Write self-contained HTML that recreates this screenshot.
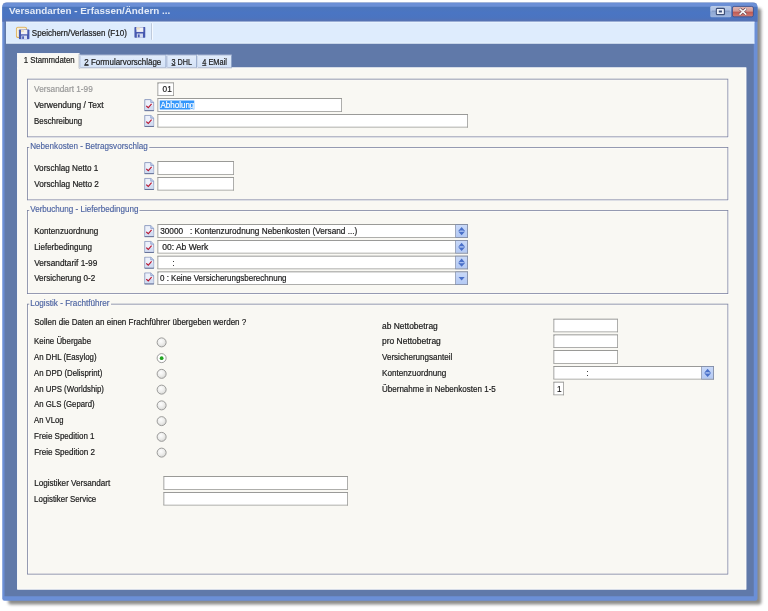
<!DOCTYPE html>
<html lang="de"><head><meta charset="utf-8"><title>Versandarten - Erfassen/Ändern ...</title>
<style>
*{box-sizing:border-box;margin:0;padding:0}
html,body{width:768px;height:611px;overflow:hidden;background:#fff}
body{position:relative;font-family:"Liberation Sans",sans-serif;font-size:11px;color:#1a1a1a;line-height:14px}
#s{position:absolute;left:0;top:0;width:1024px;height:814px;transform:scale(.75);transform-origin:0 0}
#s *{position:absolute}
.shadow{left:11px;top:11px;width:1004px;height:795px;background:#8b8b89;border-radius:3px;filter:blur(2.2px)}
.win{left:3px;top:3px;width:1007px;height:798px;background:#6b8fd6;border-radius:6px 6px 3px 3px;border-top:1px solid #5a78b6}
.title{left:3px;top:9px;width:1007px;height:20px;background:linear-gradient(#4d76bb,#4a75c3 40%,#4b74c0 75%,#5a71af)}
.tt{font-weight:bold;font-size:13.3px;line-height:16px;left:0;top:0;padding:4px;color:#e4ebf7;white-space:pre;transform-origin:0 0}
.inner{left:6px;top:29px;width:999px;height:766px;background:#6079a9}
.toolbar{left:8px;top:29px;width:998px;height:29px;background:#deecfd;border-top:1px solid #eef6ff;border-bottom:1px solid #f0f7ff}
.panel{left:23px;top:90px;width:972px;height:696px;background:#f9f8f3;border:1px solid #fff}
.t{white-space:pre;line-height:14px;left:0;top:0;padding:4px;transform-origin:0 0;-webkit-text-stroke:.25px}
.gb{border:1px solid #747b9c;box-shadow:1px 1px 0 rgba(255,255,255,.9),inset 1px 1px 0 rgba(255,255,255,.9)}
.gt{color:#4d64a2;white-space:pre;line-height:14px;left:0;top:0;padding:4px;transform-origin:0 0;-webkit-text-stroke:.2px}
.gtb{background:#f9f8f3;height:3px}
.fld{background:#fff;border:1px solid #939390;border-top-color:#787876;border-left-color:#858583}
.tab{top:73px;height:18px;background:linear-gradient(#e2ecfb,#d3e2f7);border:1px solid #eef4fd;border-bottom-color:#9faac2;border-right-color:#9db0d0}
.tab.act{top:71px;height:21px;background:#f9f8f3;border-color:#fff #8e98ad #f9f8f3 #fff}
.rad{width:13px;height:13px;border-radius:50%;border:1px solid #7d7d7d;background:radial-gradient(circle at 40% 35%,#fdfdfd 0%,#ededeb 45%,#cbcbc8 100%)}
.rad.on{background:#fff}
.rad i{left:3px;top:3px;width:5px;height:5px;border-radius:50%;background:#22a422}
.spin{background:linear-gradient(#c9d9f8,#b4c9f3);border:1px solid #7f8cab}
#s u{position:static;text-decoration:underline}
</style></head>
<body>
<div id="s">
<div class="shadow"></div>
<div class="win"></div>
<div class="title"></div>
<div class="tt" style="transform:translate(7.94px,2.4px) scaleX(0.99);">Versandarten - Erfassen/Ändern ...</div>
<div class="inner"></div>
<div class="toolbar"></div>
<div style="left:947px;top:8px;width:28px;height:15px;background:linear-gradient(#bacbe8,#a9bde2 45%,#90a9d5 52%,#9cb3dc);border-radius:2px"></div>
<div style="left:949px;top:14px;width:24px;height:2px;background:#8298c4;opacity:.8"></div>
<svg style="left:954px;top:10px" width="13" height="11" viewBox="0 0 13 11"><rect x="1" y="1" width="11" height="8.6" rx="1.6" fill="#edf1fa" stroke="#3d4f78" stroke-width="1.7"/><rect x="4.4" y="4" width="4.2" height="2.6" fill="#3d4f78"/></svg>
<div style="left:976px;top:8px;width:29px;height:15px;background:linear-gradient(#dfb4b1,#d39a96 45%,#bf5a53 55%,#cc7b74);border:1px solid #454b7c;border-radius:3px"></div>
<svg style="left:984px;top:10px" width="13" height="11" viewBox="0 0 13 11"><path d="M2 1.4 L11 9.4 M11 1.4 L2 9.4" stroke="#5f3b45" stroke-width="3.8" fill="none"/><path d="M2 1.4 L11 9.4 M11 1.4 L2 9.4" stroke="#f8f5f5" stroke-width="2.2" fill="none"/></svg>
<svg style="left:21px;top:35px" width="19" height="18" viewBox="0 0 19 18"><rect x="0.8" y="1.4" width="13.6" height="13.6" rx="2.2" fill="#f6efdc" stroke="#e0b45c" stroke-width="1.4"/><rect x="4.2" y="4.4" width="14" height="13" rx="1" fill="#4759b0"/><rect x="7" y="4.7" width="8.4" height="6" fill="#f1f0f4"/><rect x="7" y="4.7" width="4" height="3" fill="#eadfc6"/><rect x="7.4" y="12.4" width="7.6" height="5" fill="#d5ddf2"/><rect x="8.6" y="13.4" width="2.3" height="3.5" fill="#4759b0"/></svg>
<div class="t" style="transform:translate(38.61px,33px) scaleX(0.972);">Speichern/Verlassen (F10)</div>
<svg style="left:179px;top:36px" width="15" height="15" viewBox="0 0 15 15"><rect x="0" y="0" width="15" height="14.4" rx="1" fill="#4759b0"/><rect x="2.9" y="0.4" width="9.2" height="6.2" fill="#f1f0f4"/><rect x="2.9" y="0.4" width="4.4" height="3" fill="#eadfc6"/><rect x="3.4" y="8.7" width="8.2" height="5.7" fill="#d5ddf2"/><rect x="4.8" y="9.9" width="2.4" height="3.8" fill="#4759b0"/></svg>
<div style="left:202px;top:31px;width:2px;height:22px;background:linear-gradient(90deg,#9fa8ba 50%,#f4f9ff 50%)"></div>
<div class="panel"></div>
<div class="tab act" style="left:23px;width:83px"></div>
<div class="t" style="transform:translate(27.8px,69.6px) scaleX(0.951);">1 Stammdaten</div>
<div class="tab" style="left:106px;width:116px"></div>
<div class="t" style="transform:translate(108.44px,71px) scaleX(0.966);"><u>2</u> Formularvorschläge</div>
<div class="tab" style="left:222px;width:41px"></div>
<div class="t" style="transform:translate(225.08px,71px) scaleX(0.879);"><u>3</u> DHL</div>
<div class="tab" style="left:263px;width:46px"></div>
<div class="t" style="transform:translate(266.0px,71px) scaleX(0.9);"><u>4</u> EMail</div>
<div class="gb" style="left:36px;top:105px;width:935px;height:78px"></div>
<div class="t" style="transform:translate(41.5px,108px) scaleX(0.999);color:#999">Versandart 1-99</div>
<div class="fld" style="left:210px;top:110px;width:22px;height:18px;"></div>
<div class="t" style="transform:translate(212.8px,108px) scaleX(1.0);">01</div>
<div class="t" style="transform:translate(41.4px,129px) scaleX(1.026);">Verwendung / Text</div>
<svg style="left:192px;top:132px" width="14" height="17" viewBox="0 0 14 17"><path d="M1 0.8 H9 L13 4.6 V15.4 H1 Z" fill="#edf1fb" stroke="#7686b2" stroke-width="1"/><path d="M1.5 9 H12.5 V15 H1.5 Z" fill="#d3ddf2"/><path d="M9 0.8 V4.6 H13" fill="#c3d1ee" stroke="#7c8fc0" stroke-width="0.9"/><path d="M0.8 15.6 H13.2" stroke="#5b6991" stroke-width="1.2"/><path d="M3 9.2 L5.7 11.7 L10.1 6.5" fill="none" stroke="#bb142c" stroke-width="1.55"/></svg>
<div class="fld" style="left:210px;top:131px;width:246px;height:18px;"></div>
<div style="left:213px;top:134px;width:46px;height:12px;background:#3396fb"></div>
<div class="t" style="transform:translate(210.12px,129px) scaleX(0.969);color:#fff">Abholung</div>
<div class="t" style="transform:translate(41.68px,150px) scaleX(0.954);">Beschreibung</div>
<svg style="left:192px;top:153px" width="14" height="17" viewBox="0 0 14 17"><path d="M1 0.8 H9 L13 4.6 V15.4 H1 Z" fill="#edf1fb" stroke="#7686b2" stroke-width="1"/><path d="M1.5 9 H12.5 V15 H1.5 Z" fill="#d3ddf2"/><path d="M9 0.8 V4.6 H13" fill="#c3d1ee" stroke="#7c8fc0" stroke-width="0.9"/><path d="M0.8 15.6 H13.2" stroke="#5b6991" stroke-width="1.2"/><path d="M3 9.2 L5.7 11.7 L10.1 6.5" fill="none" stroke="#bb142c" stroke-width="1.55"/></svg>
<div class="fld" style="left:210px;top:152px;width:414px;height:18px;"></div>
<div class="gb" style="left:36px;top:196px;width:935px;height:71px"></div>
<div class="gtb" style="left:39px;top:195px;width:159.7px"></div>
<div class="gt" style="transform:translate(36.37px,184px) scaleX(0.982);">Nebenkosten - Betragsvorschlag</div>
<div class="t" style="transform:translate(41.56px,213px) scaleX(0.986);">Vorschlag Netto 1</div>
<svg style="left:192px;top:216px" width="14" height="17" viewBox="0 0 14 17"><path d="M1 0.8 H9 L13 4.6 V15.4 H1 Z" fill="#edf1fb" stroke="#7686b2" stroke-width="1"/><path d="M1.5 9 H12.5 V15 H1.5 Z" fill="#d3ddf2"/><path d="M9 0.8 V4.6 H13" fill="#c3d1ee" stroke="#7c8fc0" stroke-width="0.9"/><path d="M0.8 15.6 H13.2" stroke="#5b6991" stroke-width="1.2"/><path d="M3 9.2 L5.7 11.7 L10.1 6.5" fill="none" stroke="#bb142c" stroke-width="1.55"/></svg>
<div class="fld" style="left:210px;top:215px;width:102px;height:18px;"></div>
<div class="t" style="transform:translate(41.53px,234px) scaleX(0.993);">Vorschlag Netto 2</div>
<svg style="left:192px;top:237px" width="14" height="17" viewBox="0 0 14 17"><path d="M1 0.8 H9 L13 4.6 V15.4 H1 Z" fill="#edf1fb" stroke="#7686b2" stroke-width="1"/><path d="M1.5 9 H12.5 V15 H1.5 Z" fill="#d3ddf2"/><path d="M9 0.8 V4.6 H13" fill="#c3d1ee" stroke="#7c8fc0" stroke-width="0.9"/><path d="M0.8 15.6 H13.2" stroke="#5b6991" stroke-width="1.2"/><path d="M3 9.2 L5.7 11.7 L10.1 6.5" fill="none" stroke="#bb142c" stroke-width="1.55"/></svg>
<div class="fld" style="left:210px;top:236px;width:102px;height:18px;"></div>
<div class="gb" style="left:36px;top:280px;width:935px;height:112px"></div>
<div class="gtb" style="left:39px;top:279px;width:147.3px"></div>
<div class="gt" style="transform:translate(36.38px,267px) scaleX(0.979);">Verbuchung - Lieferbedingung</div>
<div class="t" style="transform:translate(41.56px,297px) scaleX(0.985);">Kontenzuordnung</div>
<svg style="left:192px;top:300px" width="14" height="17" viewBox="0 0 14 17"><path d="M1 0.8 H9 L13 4.6 V15.4 H1 Z" fill="#edf1fb" stroke="#7686b2" stroke-width="1"/><path d="M1.5 9 H12.5 V15 H1.5 Z" fill="#d3ddf2"/><path d="M9 0.8 V4.6 H13" fill="#c3d1ee" stroke="#7c8fc0" stroke-width="0.9"/><path d="M0.8 15.6 H13.2" stroke="#5b6991" stroke-width="1.2"/><path d="M3 9.2 L5.7 11.7 L10.1 6.5" fill="none" stroke="#bb142c" stroke-width="1.55"/></svg>
<div class="fld" style="left:210px;top:299px;width:414px;height:18px;"></div>
<div class="t" style="transform:translate(209.61px,297px) scaleX(0.997);">30000   : Kontenzurodnung Nebenkosten (Versand ...)</div>
<div class="spin" style="left:607px;top:299px;width:17px;height:18px"><svg style="left:0;top:0" width="15" height="16" viewBox="0 0 15 16"><path d="M7.5 2.6 L12 7.9 H3 Z M7.5 13.8 L12 8.5 H3 Z" fill="#4a70c8"/><path d="M5 8.2 H10" stroke="#a9c0f2" stroke-width="1.5"/></svg></div>
<div class="t" style="transform:translate(41.59px,318px) scaleX(0.978);">Lieferbedingung</div>
<svg style="left:192px;top:321px" width="14" height="17" viewBox="0 0 14 17"><path d="M1 0.8 H9 L13 4.6 V15.4 H1 Z" fill="#edf1fb" stroke="#7686b2" stroke-width="1"/><path d="M1.5 9 H12.5 V15 H1.5 Z" fill="#d3ddf2"/><path d="M9 0.8 V4.6 H13" fill="#c3d1ee" stroke="#7c8fc0" stroke-width="0.9"/><path d="M0.8 15.6 H13.2" stroke="#5b6991" stroke-width="1.2"/><path d="M3 9.2 L5.7 11.7 L10.1 6.5" fill="none" stroke="#bb142c" stroke-width="1.55"/></svg>
<div class="fld" style="left:210px;top:320px;width:414px;height:18px;"></div>
<div class="t" style="transform:translate(212.29px,318px) scaleX(1.027);">00: Ab Werk</div>
<div class="spin" style="left:607px;top:320px;width:17px;height:18px"><svg style="left:0;top:0" width="15" height="16" viewBox="0 0 15 16"><path d="M7.5 2.6 L12 7.9 H3 Z M7.5 13.8 L12 8.5 H3 Z" fill="#4a70c8"/><path d="M5 8.2 H10" stroke="#a9c0f2" stroke-width="1.5"/></svg></div>
<div class="t" style="transform:translate(41.48px,339px) scaleX(1.005);">Versandtarif 1-99</div>
<svg style="left:192px;top:342px" width="14" height="17" viewBox="0 0 14 17"><path d="M1 0.8 H9 L13 4.6 V15.4 H1 Z" fill="#edf1fb" stroke="#7686b2" stroke-width="1"/><path d="M1.5 9 H12.5 V15 H1.5 Z" fill="#d3ddf2"/><path d="M9 0.8 V4.6 H13" fill="#c3d1ee" stroke="#7c8fc0" stroke-width="0.9"/><path d="M0.8 15.6 H13.2" stroke="#5b6991" stroke-width="1.2"/><path d="M3 9.2 L5.7 11.7 L10.1 6.5" fill="none" stroke="#bb142c" stroke-width="1.55"/></svg>
<div class="fld" style="left:210px;top:341px;width:414px;height:18px;"></div>
<div class="t" style="transform:translate(226.4px,339px) scaleX(0.9);">:</div>
<div class="spin" style="left:607px;top:341px;width:17px;height:18px"><svg style="left:0;top:0" width="15" height="16" viewBox="0 0 15 16"><path d="M7.5 2.6 L12 7.9 H3 Z M7.5 13.8 L12 8.5 H3 Z" fill="#4a70c8"/><path d="M5 8.2 H10" stroke="#a9c0f2" stroke-width="1.5"/></svg></div>
<div class="t" style="transform:translate(41.58px,360px) scaleX(0.981);">Versicherung 0-2</div>
<svg style="left:192px;top:363px" width="14" height="17" viewBox="0 0 14 17"><path d="M1 0.8 H9 L13 4.6 V15.4 H1 Z" fill="#edf1fb" stroke="#7686b2" stroke-width="1"/><path d="M1.5 9 H12.5 V15 H1.5 Z" fill="#d3ddf2"/><path d="M9 0.8 V4.6 H13" fill="#c3d1ee" stroke="#7c8fc0" stroke-width="0.9"/><path d="M0.8 15.6 H13.2" stroke="#5b6991" stroke-width="1.2"/><path d="M3 9.2 L5.7 11.7 L10.1 6.5" fill="none" stroke="#bb142c" stroke-width="1.55"/></svg>
<div class="fld" style="left:210px;top:362px;width:414px;height:18px;"></div>
<div class="t" style="transform:translate(209.43px,360px) scaleX(0.968);">0 : Keine Versicherungsberechnung</div>
<div class="spin" style="left:607px;top:362px;width:17px;height:18px"><svg style="left:0;top:0" width="15" height="16" viewBox="0 0 15 16"><path d="M3.4 6.4 H11.6 L7.5 10.9 Z" fill="#4a70c8"/></svg></div>
<div class="gb" style="left:36px;top:405px;width:935px;height:361px"></div>
<div class="gtb" style="left:39px;top:404px;width:108.69999999999999px"></div>
<div class="gt" style="transform:translate(36.34px,393px) scaleX(0.989);">Logistik - Frachtführer</div>
<div class="t" style="transform:translate(41.6px,418px) scaleX(0.976);">Sollen die Daten an einen Frachführer übergeben werden ?</div>
<div class="t" style="transform:translate(41.68px,444px) scaleX(0.954);">Keine Übergabe</div>
<div class="rad" style="left:209px;top:450px"></div>
<div class="t" style="transform:translate(41.7px,465px) scaleX(0.949);">An DHL (Easylog)</div>
<div class="rad on" style="left:209px;top:471px"><i></i></div>
<div class="t" style="transform:translate(41.71px,486px) scaleX(0.947);">An DPD (Delisprint)</div>
<div class="rad" style="left:209px;top:492px"></div>
<div class="t" style="transform:translate(41.71px,507px) scaleX(0.948);">An UPS (Worldship)</div>
<div class="rad" style="left:209px;top:513px"></div>
<div class="t" style="transform:translate(41.74px,528px) scaleX(0.941);">An GLS (Gepard)</div>
<div class="rad" style="left:209px;top:534px"></div>
<div class="t" style="transform:translate(41.79px,549px) scaleX(0.927);">An VLog</div>
<div class="rad" style="left:209px;top:555px"></div>
<div class="t" style="transform:translate(41.62px,570px) scaleX(0.969);">Freie Spedition 1</div>
<div class="rad" style="left:209px;top:576px"></div>
<div class="t" style="transform:translate(41.6px,591px) scaleX(0.976);">Freie Spedition 2</div>
<div class="rad" style="left:209px;top:597px"></div>
<div class="t" style="transform:translate(41.57px,633px) scaleX(0.983);">Logistiker Versandart</div>
<div class="fld" style="left:218px;top:635px;width:246px;height:18px;"></div>
<div class="t" style="transform:translate(41.68px,654px) scaleX(0.954);">Logistiker Service</div>
<div class="fld" style="left:218px;top:656px;width:246px;height:18px;"></div>
<div class="t" style="transform:translate(505.21px,423px) scaleX(1.022);">ab Nettobetrag</div>
<div class="t" style="transform:translate(505.2px,444px) scaleX(1.026);">pro Nettobetrag</div>
<div class="t" style="transform:translate(505.39px,465px) scaleX(0.977);">Versicherungsanteil</div>
<div class="t" style="transform:translate(505.35px,486px) scaleX(0.988);">Kontenzuordnung</div>
<div class="t" style="transform:translate(505.41px,507px) scaleX(0.973);">Übernahme in Nebenkosten 1-5</div>
<div class="fld" style="left:738px;top:425px;width:86px;height:18px;"></div>
<div class="fld" style="left:738px;top:446px;width:86px;height:18px;"></div>
<div class="fld" style="left:738px;top:467px;width:86px;height:18px;"></div>
<div class="fld" style="left:738px;top:488px;width:214px;height:18px;"></div>
<div class="t" style="transform:translate(778.4px,486px) scaleX(0.9);">:</div>
<div class="spin" style="left:935px;top:488px;width:17px;height:18px"><svg style="left:0;top:0" width="15" height="16" viewBox="0 0 15 16"><path d="M7.5 2.6 L12 7.9 H3 Z M7.5 13.8 L12 8.5 H3 Z" fill="#4a70c8"/><path d="M5 8.2 H10" stroke="#a9c0f2" stroke-width="1.5"/></svg></div>
<div class="fld" style="left:738px;top:509px;width:14px;height:18px;"></div>
<div class="t" style="transform:translate(738.62px,507px) scaleX(0.995);">1</div>
</div>
</body></html>
